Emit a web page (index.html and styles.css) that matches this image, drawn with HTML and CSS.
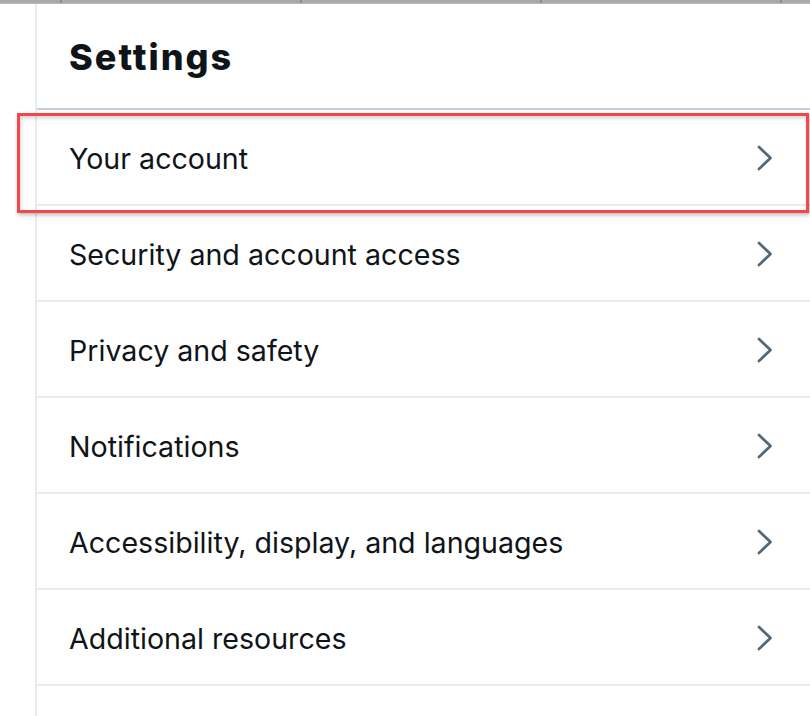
FILE: index.html
```html
<!DOCTYPE html>
<html lang="en">
<head>
<meta charset="utf-8">
<title>Settings</title>
<link rel="stylesheet" href="styles.css">
</head>
<body>
<div class="tabbar">
  <span class="tab t1"></span>
  <span class="tab"></span>
  <span class="tab"></span>
  <span class="tab"></span>
  <span class="tab last"></span>
</div>
<main class="panel">
  <header class="head"><h1>Settings</h1></header>
  <ul class="menu">
    <li class="item"><span>Your account</span><svg class="chev" viewBox="0 0 16 26"><path d="M2 2 L13.5 13 L2 24"/></svg></li>
    <li class="item"><span>Security and account access</span><svg class="chev" viewBox="0 0 16 26"><path d="M2 2 L13.5 13 L2 24"/></svg></li>
    <li class="item"><span>Privacy and safety</span><svg class="chev" viewBox="0 0 16 26"><path d="M2 2 L13.5 13 L2 24"/></svg></li>
    <li class="item"><span>Notifications</span><svg class="chev" viewBox="0 0 16 26"><path d="M2 2 L13.5 13 L2 24"/></svg></li>
    <li class="item"><span>Accessibility, display, and languages</span><svg class="chev" viewBox="0 0 16 26"><path d="M2 2 L13.5 13 L2 24"/></svg></li>
    <li class="item"><span>Additional resources</span><svg class="chev" viewBox="0 0 16 26"><path d="M2 2 L13.5 13 L2 24"/></svg></li>
  </ul>
</main>
<div class="highlight"></div>
</body>
</html>
```
FILE: styles.css
```css
html, body {
  margin: 0;
  padding: 0;
  background: #ffffff;
  height: 100%;
  overflow: hidden;
}
body {
  font-family: Inter, "Liberation Sans", sans-serif;
  color: #0f1419;
}
.tabbar {
  display: flex;
  height: 3px;
  background: #aaa8aa;
  border-bottom: 1px solid #bdbbbd;
}
.tab {
  flex: 0 0 240px;
  border-right: 2px solid #8e8c8e;
  box-sizing: border-box;
}
.tab.t1 {
  flex-basis: 62px;
}
.tab.last {
  flex: 1;
  border-right: none;
}
.panel {
  margin-left: 35px;
  border-left: 2px solid #e6ecf0;
  min-height: 100%;
}
.head {
  height: 106px;
  border-bottom: 2px solid #c4ced6;
  display: flex;
  align-items: center;
  padding-left: 32px;
  box-sizing: border-box;
}
.head h1 {
  margin: 0;
  font-family: Inter, "Liberation Sans", sans-serif;
  font-weight: 800;
  font-size: 36px;
  letter-spacing: 2px;
  color: #0f1419;
  padding-top: 2px;
}
.menu {
  list-style: none;
  margin: 0;
  padding: 0;
}
.item {
  height: 96px;
  box-sizing: border-box;
  border-bottom: 2px solid #e6ecf0;
  display: flex;
  align-items: center;
  justify-content: space-between;
  padding: 2px 37px 0 32px;
  font-size: 28.6px;
}
.chev {
  width: 16px;
  height: 26px;
  fill: none;
  stroke: #536676;
  stroke-width: 2.7;
  stroke-linecap: round;
  stroke-linejoin: round;
}
.highlight {
  position: absolute;
  left: 17px;
  top: 113px;
  width: 786px;
  height: 94px;
  border: 3px solid #f2474b;
  box-shadow: 1px 2px 4px rgba(0, 0, 0, 0.28), inset 1px 2px 4px rgba(0, 0, 0, 0.18);
  pointer-events: none;
}
```
